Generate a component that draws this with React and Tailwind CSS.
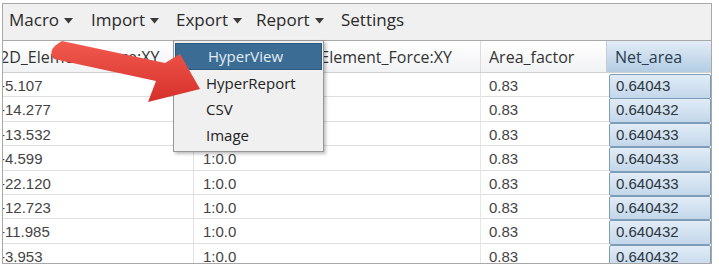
import React from 'react';

const ui = { fontFamily: '"Open Sans", "Noto Sans", sans-serif' };
const data = { fontFamily: '"Liberation Sans", Arial, sans-serif' };

const rows = [
  ['-5.107', '0.64043'],
  ['-14.277', '0.640432'],
  ['-13.532', '0.640433'],
  ['-4.599', '0.640433'],
  ['-22.120', '0.640433'],
  ['-12.723', '0.640432'],
  ['-11.985', '0.640432'],
  ['-3.953', '0.640432'],
];

const Caret = () => (
  <svg width="9" height="6" viewBox="0 0 9 6" className="ml-[5px] mt-[2px]">
    <path d="M0 0 H9 L4.5 5.5 Z" fill="#3a3a3a" />
  </svg>
);

const MenuItem = ({ label, width, caret = true }) => (
  <div className={`flex items-center ${width}`}>
    <span>{label}</span>
    {caret && <Caret />}
  </div>
);

const App = () => {
  return (
    <div className="relative w-[719px] h-[267px] bg-white overflow-hidden">
      <div className="pt-[3px] pl-[2px]">
        <div className="w-[710px] h-[261px] border border-[#a8a8a8] overflow-hidden">
          {/* Menu bar */}
          <div
            className="h-[37px] bg-[#f0f0f0] flex items-center pl-[6px] pb-[4px] text-[17px] text-[#2a2a2a] border-b border-[#a9a9a9]"
            style={ui}
          >
            <MenuItem label="Macro" width="w-[82px]" />
            <MenuItem label="Import" width="w-[85px]" />
            <MenuItem label="Export" width="w-[80px]" />
            <MenuItem label="Report" width="w-[85px]" />
            <MenuItem label="Settings" width="w-[80px]" caret={false} />
          </div>

          {/* Header */}
          <div
            className="grid grid-cols-[191px_287px_126px_104px] h-[32px] border-b border-[#d0d0d0] text-[16px] text-[#333]"
            style={ui}
          >
            <div className="flex items-center border-r border-[#dcdcdc] bg-gradient-to-b from-white to-[#f1f2f4] -ml-[3px] overflow-hidden whitespace-nowrap">
              2D_Element_Force:XY
            </div>
            <div className="flex items-center justify-end pr-[28px] border-r border-[#dcdcdc] bg-gradient-to-b from-white to-[#f1f2f4] whitespace-nowrap">
              2D_Element_Force:XY
            </div>
            <div className="flex items-center pl-[8px] border-r border-[#c8ccd2] bg-gradient-to-b from-white to-[#f1f2f4]">
              Area_factor
            </div>
            <div className="flex items-center pl-[8px] bg-gradient-to-b from-[#e2edf7] to-[#b3cce3] text-[#2b3d50]">
              Net_area
            </div>
          </div>

          {/* Rows */}
          {rows.map(([v, net], i) => (
            <div
              key={i}
              className="grid grid-cols-[191px_287px_126px_104px] h-[24.4px] border-b border-[#dedede] text-[15px] text-[#444]"
              style={data}
            >
              <div className="flex items-center border-r border-[#e2e2e2] overflow-hidden whitespace-nowrap">
                <span className="-ml-[3px]">{v}</span>
              </div>
              <div className="flex items-center pl-[9px] border-r border-[#e6e6e6]">1:0.0</div>
              <div className="flex items-center pl-[8px]">0.83</div>
              <div className="flex items-center py-[1px] pl-[2px]">
                <div className="h-full w-full flex items-center pl-[6px] rounded-[2px] border border-[#7d9cb9] bg-gradient-to-b from-[#e1ecf6] to-[#c3d7ea] text-[#2d3540]">
                  {net}
                </div>
              </div>
            </div>
          ))}
        </div>
      </div>

      {/* Export dropdown */}
      <div
        className="absolute left-[173px] top-[40px] w-[151px] h-[112px] bg-[#f0f0f0] border border-[#979797] shadow-[2px_2px_3px_rgba(0,0,0,0.25)] pt-[2px] px-[1px] text-[15px] text-[#222]"
        style={ui}
      >
        <div className="h-[27px] flex items-center pl-[32px] bg-[#3b6c94] border border-[#2e5a80] text-[#e3edf5]">
          HyperView
        </div>
        <div className="h-[26px] flex items-center pl-[31px]">HyperReport</div>
        <div className="h-[26px] flex items-center pl-[31px]">CSV</div>
        <div className="h-[26px] flex items-center pl-[31px]">Image</div>
      </div>

      {/* Red arrow */}
      <svg className="absolute left-0 top-0 pointer-events-none" width="719" height="267" viewBox="0 0 719 267">
        <defs>
          <linearGradient id="arrowFill" x1="0" y1="0" x2="0" y2="1">
            <stop offset="0" stopColor="#f25a4e" />
            <stop offset="1" stopColor="#d5302a" />
          </linearGradient>
        </defs>
        <path
          d="M62 41 L165 63 L180 54 L200 89 L148 102 L156 81 L54 59 Q46 50 62 41 Z"
          fill="url(#arrowFill)"
        />
      </svg>
    </div>
  );
};

export default App;
